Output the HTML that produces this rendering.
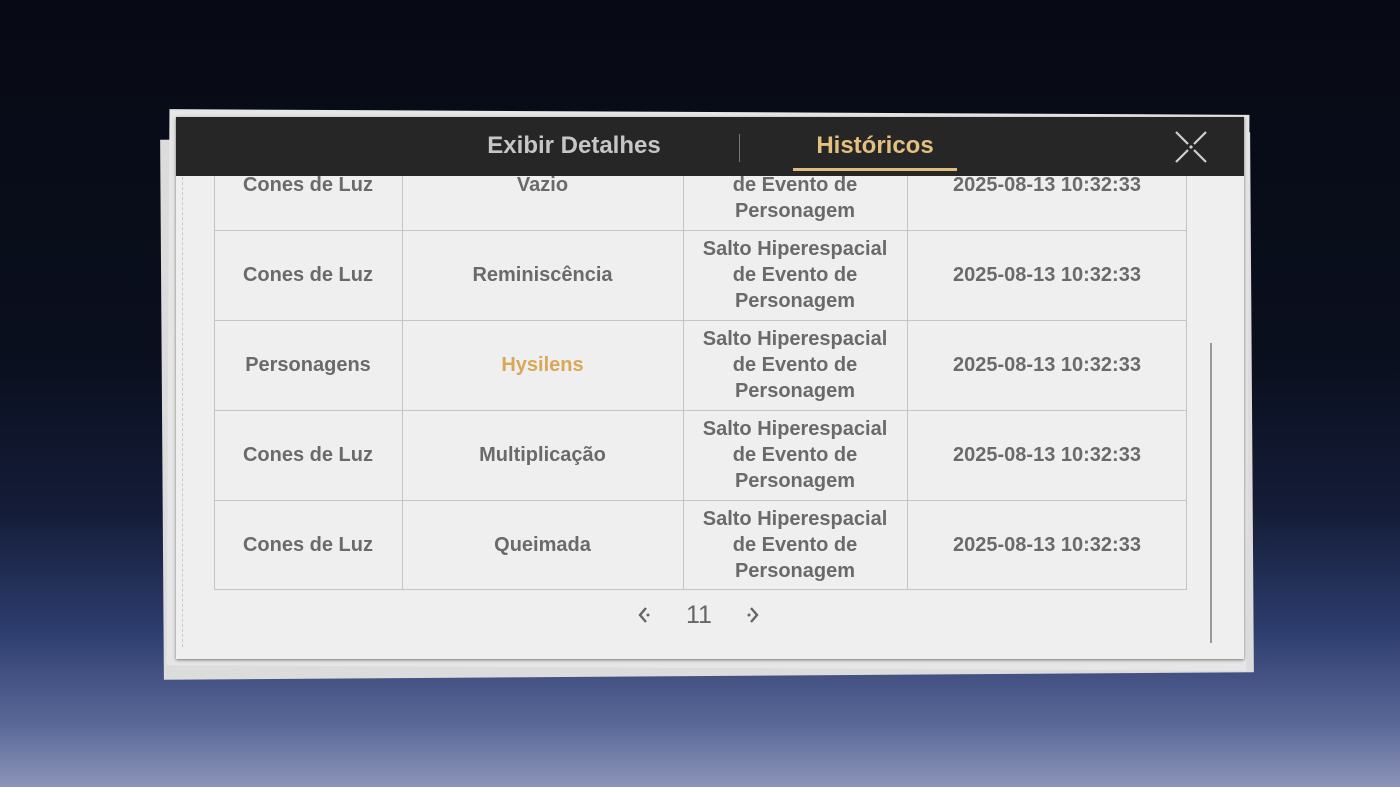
<!DOCTYPE html>
<html><head><style>
*{margin:0;padding:0;box-sizing:border-box}
body{width:1400px;height:787px;overflow:hidden;position:relative;font-family:"Liberation Sans",sans-serif;
background:linear-gradient(180deg,#070a14 0%,#0a0f1e 45%,#141c38 65%,#2c3c6c 80%,#5a6898 92%,#8c94b8 100%)}
.p{position:absolute}
.cell{position:absolute;display:flex;align-items:center;justify-content:center;text-align:center;color:#6a6a6a;font-size:20px;font-weight:bold;line-height:26px;letter-spacing:0}
</style></head><body>
<div class="p" style="left:162px;top:136px;width:1090px;height:540px;background:#dcdcdc;transform:rotate(-0.4deg)"></div>
<div class="p" style="left:168px;top:112px;width:1080px;height:556px;background:#e6e6e6;transform:rotate(0.3deg)"></div>
<div class="p" style="left:176px;top:117px;width:1068px;height:542px;background:#efefef;box-shadow:0 1px 3px rgba(0,0,0,.5);overflow:hidden">
  <div class="p" style="left:6px;top:60px;width:1px;height:470px;border-left:1px dashed #c8c8c8"></div>
  <div class="p" style="left:1034px;top:226px;width:2px;height:300px;background:#999"></div>
  <div class="p" style="left:38px;top:23px;width:973px;height:450px;border-left:1px solid #c4c4c4;border-right:1px solid #c4c4c4;border-bottom:1px solid #c4c4c4"></div>
  <div class="p" style="left:226px;top:23px;width:1px;height:450px;background:#c4c4c4"></div>
  <div class="p" style="left:507px;top:23px;width:1px;height:450px;background:#c4c4c4"></div>
  <div class="p" style="left:731px;top:23px;width:1px;height:450px;background:#c4c4c4"></div>
  <div class="p" style="left:38px;top:113px;width:973px;height:1px;background:#c4c4c4"></div>
  <div class="p" style="left:38px;top:203px;width:973px;height:1px;background:#c4c4c4"></div>
  <div class="p" style="left:38px;top:293px;width:973px;height:1px;background:#c4c4c4"></div>
  <div class="p" style="left:38px;top:383px;width:973px;height:1px;background:#c4c4c4"></div>
</div>
<div id="rows"></div>
<div class="p" style="left:176px;top:117px;width:1068px;height:59px;background:#262626"></div>
<div class="p" style="left:474px;top:132px;width:200px;text-align:center;font-size:24px;font-weight:bold;color:#c6c6c6">Exibir Detalhes</div>
<div class="p" style="left:739px;top:134px;width:1px;height:28px;background:#777"></div>
<div class="p" style="left:775px;top:132px;width:200px;text-align:center;font-size:24px;font-weight:bold;color:#e3c07f">Históricos</div>
<div class="p" style="left:793px;top:168px;width:164px;height:3px;background:#e0bd7c"></div>
<svg class="p" style="left:1174px;top:131px" width="34" height="32" viewBox="0 0 34 32"><path d="M2 1L14 13M20 19L32 31M32 1L20 13M14 19L2 31" stroke="#d0d0d0" stroke-width="2.2" fill="none"/><circle cx="17" cy="16" r="1.6" fill="#d0d0d0"/></svg>
<svg class="p" style="left:637px;top:606px" width="14" height="18" viewBox="0 0 14 18"><path d="M9 2L3 9L9 16" stroke="#666" stroke-width="2.4" fill="none"/><circle cx="11" cy="9" r="1.5" fill="#666"/></svg>
<div class="p" style="left:686px;top:601px;font-size:25px;color:#666">11</div>
<svg class="p" style="left:746px;top:606px" width="14" height="18" viewBox="0 0 14 18"><path d="M5 2L11 9L5 16" stroke="#666" stroke-width="2.4" fill="none"/><circle cx="3" cy="9" r="1.5" fill="#666"/></svg>
<script>
const rows=[["Cones de Luz","Vazio",0],["Cones de Luz","Reminiscência",0],["Personagens","Hysilens",1],["Cones de Luz","Multiplicação",0],["Cones de Luz","Queimada",0]];
let h="";rows.forEach((r,i)=>{const t=140+i*90;
h+=`<div class="cell" style="left:214px;top:${t}px;width:188px;height:90px">${r[0]}</div>`;
h+=`<div class="cell" style="left:402px;top:${t}px;width:281px;height:90px;${r[2]?'color:#d9a857':''}">${r[1]}</div>`;
h+=`<div class="cell" style="left:683px;top:${t}px;width:224px;height:90px">Salto Hiperespacial<br>de Evento de<br>Personagem</div>`;
h+=`<div class="cell" style="left:907px;top:${t}px;width:280px;height:90px">2025-08-13 10:32:33</div>`;});
document.getElementById("rows").innerHTML=h;
</script>
</body></html>
